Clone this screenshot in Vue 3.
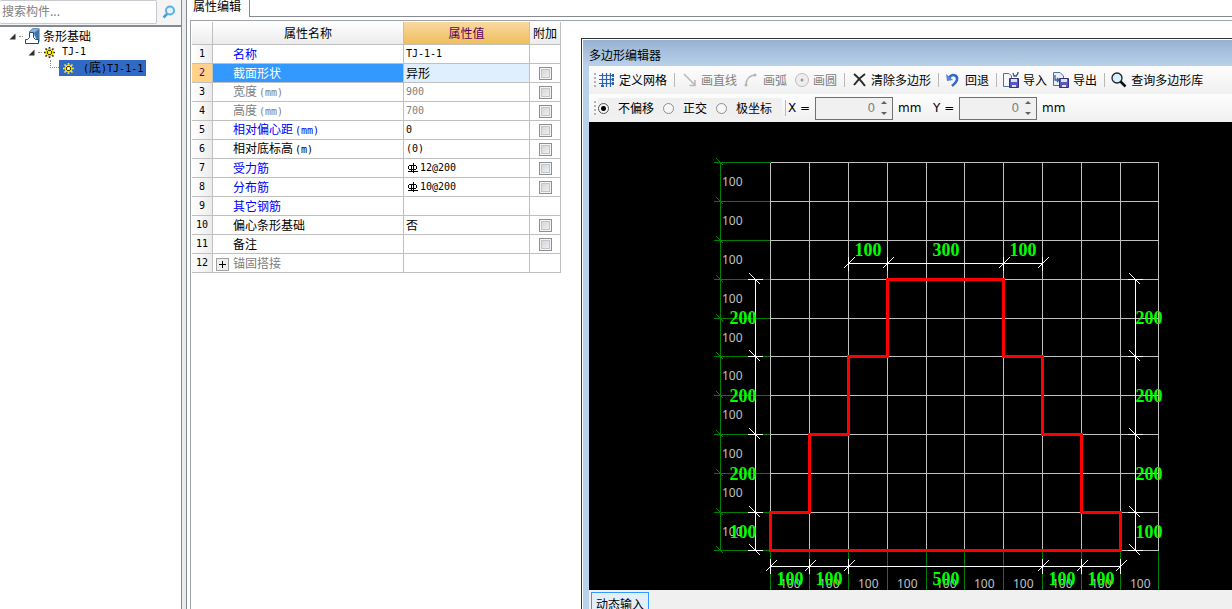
<script setup>
import { ref } from 'vue'

const search = ref('')
const mode = ref('none')
const offsetX = ref('0')
const offsetY = ref('0')

const rows = [
  { name: '名称', tone: 'blue', value: 'TJ-1-1', latin: true },
  { name: '截面形状', tone: 'selected', value: '异形', box: true },
  { name: '宽度', unit: '(mm)', tone: 'gray', value: '900', latin: true, box: true },
  { name: '高度', unit: '(mm)', tone: 'gray', value: '700', latin: true, box: true },
  { name: '相对偏心距', unit: '(mm)', tone: 'blue', value: '0', latin: true, box: true },
  { name: '相对底标高', unit: '(m)', tone: 'black', value: '(0)', latin: true, box: true },
  { name: '受力筋', tone: 'blue', value: '12@200', latin: true, bar: true, box: true },
  { name: '分布筋', tone: 'blue', value: '10@200', latin: true, bar: true, box: true },
  { name: '其它钢筋', tone: 'blue', value: '' },
  { name: '偏心条形基础', tone: 'black', value: '否', box: true },
  { name: '备注', tone: 'black', value: '', box: true },
  { name: '锚固搭接', tone: 'gray', value: '', group: true },
]

// Grid line positions on the drawing canvas, 100 mm apart
const gx = [181, 220, 259, 298, 337, 375, 414, 453, 492, 531, 569]
const gy = [40, 79, 118, 157, 196, 234, 273, 312, 351, 390, 428]
const cells = [0, 1, 2, 3, 4, 5, 6, 7, 8, 9]

const outline = [
  [3, 3], [6, 3], [6, 5], [7, 5], [7, 7], [8, 7], [8, 9], [9, 9], [9, 10],
  [0, 10], [0, 9], [1, 9], [1, 7], [2, 7], [2, 5], [3, 5],
].map(([i, j]) => `${gx[i]},${gy[j]}`).join(' ')

const sideStops = [3, 5, 7, 9, 10]
const topStops = [2, 3, 6, 7]
const bottomStops = [0, 1, 2, 7, 8, 9]

function spans(stops, axis) {
  return stops.slice(1).map((s, k) => ({
    at: Math.floor((axis[s] + axis[stops[k]]) / 2),
    text: (s - stops[k]) * 100,
  }))
}
const sideSpans = spans(sideStops, gy)
const topSpans = spans(topStops, gx)
const bottomSpans = spans(bottomStops, gx)
</script>

<template>
  <div class="page">
    <aside class="side">
      <div class="search">
        <input v-model="search" type="text" placeholder="搜索构件..." aria-label="搜索构件">
        <button type="button" aria-label="搜索">
          <svg width="14" height="14" viewBox="0 0 14 14">
            <path d="M1.500 12.500L5.500 8.500" stroke="#4a9fd8" stroke-width="2.500" />
            <circle cx="8" cy="5.500" r="4" fill="#e4f4fd" stroke="#5cb0e4" stroke-width="2" />
          </svg>
        </button>
      </div>
      <ul class="tree">
        <li class="l1">
          <svg class="arrow" width="7" height="7" viewBox="0 0 7 7"><path d="M6.500 0.500V6.500H0.500Z" fill="#303030" /></svg>
          <i class="dots" />
          <svg width="16" height="16" viewBox="0 0 16 16">
            <path d="M4 4L8 0H14L15 1V14L12 13L8 5Z" fill="#8fb1d2" />
            <path d="M9 5L14 1V14L11 10Z" fill="#3f74a8" />
            <path d="M4 4L8 0.500H13" fill="none" stroke="#5b8fbd" />
            <path d="M4.500 4.500H8.500V9.500L10.500 11.500H13.500V15.500H0.500V11.500H2.500L4.500 9.500Z" fill="#fff" stroke="#14508a" />
          </svg>
          <span class="label">条形基础</span>
        </li>
        <li class="l2">
          <svg class="arrow" width="7" height="7" viewBox="0 0 7 7"><path d="M6.500 0.500V6.500H0.500Z" fill="#303030" /></svg>
          <i class="dots" />
          <svg width="11" height="11" viewBox="0 0 11 11">
            <path d="M5.500 0V11M0 5.500H11M1.500 1.500L9.500 9.500M9.500 1.500L1.500 9.500" stroke="#2c2600" stroke-width="1.600" />
            <circle cx="5.500" cy="5.500" r="3.500" fill="#ffec1c" stroke="#e6cf00" />
            <path d="M4 3.500H7M4 7.500H7M3.500 4V7M7.500 4V7" stroke="#4a4000" />
            <path d="M5 5H6V6H5Z" fill="#fff" />
          </svg>
          <span class="label latin">TJ-1</span>
        </li>
        <li class="l3">
          <i class="elbow" />
          <span class="chosen">
            <svg width="11" height="11" viewBox="0 0 11 11">
              <path d="M5.500 0V11M0 5.500H11M1.500 1.500L9.500 9.500M9.500 1.500L1.500 9.500" stroke="#ffec1c" stroke-width="1.600" />
              <circle cx="5.500" cy="5.500" r="3.500" fill="#ffec1c" stroke="#e6cf00" />
              <path d="M4 3.500H7M4 7.500H7M3.500 4V7M7.500 4V7" stroke="#4a4000" />
              <path d="M5 5H6V6H5Z" fill="#fff" />
            </svg>
            <span class="label"><span class="latin">(</span>底<span class="latin">)TJ-1-1</span></span>
          </span>
        </li>
      </ul>
    </aside>
    <div class="splitter" />

    <main class="main">
      <div class="tabs">
        <button type="button" class="tab">属性编辑</button>
        <div class="tabline" />
      </div>
      <div class="body">
        <table class="props">
          <colgroup><col class="c-no"><col class="c-name"><col class="c-value"><col class="c-box"></colgroup>
          <thead>
            <tr><th /><th>属性名称</th><th class="hot">属性值</th><th>附加</th></tr>
          </thead>
          <tbody>
            <tr v-for="(r, i) in rows" :key="r.name" :class="r.tone">
              <th scope="row" class="latin">{{ i + 1 }}</th>
              <td class="name" :class="{ group: r.group }">
                <button v-if="r.group" type="button" class="plus" aria-label="展开">
                  <svg width="11" height="11" viewBox="0 0 11 11"><path d="M2 5.500H9M5.500 2V9" stroke="#000" /></svg>
                </button>{{ r.name }}<span v-if="r.unit" class="latin unit">{{ r.unit }}</span>
              </td>
              <td class="value" :class="{ latin: r.latin }">
                <svg v-if="r.bar" class="bar" width="11" height="10" viewBox="0 0 11 10">
                  <path d="M4.500 2V9M6.500 0V10M2 2.500H9M2 6.500H9M1.500 3V6M9.500 3V6M1 8.500H11" fill="none" stroke="#000" />
                </svg>{{ r.value }}
              </td>
              <td class="box"><input v-if="r.box" type="checkbox" :aria-label="r.name + ' 附加'"></td>
            </tr>
          </tbody>
        </table>

        <section class="editor">
          <header class="title">多边形编辑器</header>
          <div class="client">
            <div class="bar1">
              <i class="grip" />
              <button type="button" class="tool">
                <svg width="16" height="16" viewBox="0 0 16 16">
                  <path d="M3.500 1V15M7.500 1V15M11.500 1V15M0 3.500H15M0 7.500H15M0 11.500H15" stroke="#2d63b8" stroke-width="1.200" />
                  <path d="M2 13H5V15H2ZM13 2H15V5H13ZM13 6H15V9H13ZM13 10H15V13H13Z" fill="#2d63b8" />
                </svg>定义网格
              </button>
              <i class="sep" />
              <button type="button" class="tool off" disabled>
                <svg width="16" height="16" viewBox="0 0 16 16">
                  <path d="M3 2L14 13M14 8V13.500H8.500" fill="none" stroke="#b8b8b8" stroke-width="1.500" />
                </svg>画直线
              </button>
              <button type="button" class="tool off" disabled>
                <svg width="16" height="16" viewBox="0 0 16 16">
                  <path d="M3 13Q3 4 12 3" fill="none" stroke="#b4b4b4" stroke-width="1.500" />
                  <circle cx="3" cy="13" r="1.500" fill="#b4b4b4" /><circle cx="12" cy="3" r="1.500" fill="#b4b4b4" />
                </svg>画弧
              </button>
              <button type="button" class="tool off" disabled>
                <svg width="16" height="16" viewBox="0 0 16 16">
                  <circle cx="9" cy="8" r="6.500" fill="#eee" stroke="#bcbcbc" /><circle cx="9" cy="8" r="1.500" fill="#999" />
                </svg>画圆
              </button>
              <i class="sep" />
              <button type="button" class="tool">
                <svg width="16" height="16" viewBox="0 0 16 16">
                  <path d="M3 2Q8 6 14 14M14 2Q8 6 3 13" fill="none" stroke="#2b2b2b" stroke-width="2" />
                </svg>清除多边形
              </button>
              <i class="sep" />
              <button type="button" class="tool">
                <svg width="16" height="16" viewBox="0 0 16 16">
                  <path d="M4 6C7 1 13 3 12 8C11 11 9 12 7 14" fill="none" stroke="#3169c6" stroke-width="2.500" />
                  <path d="M1 2L2 9L8 8Z" fill="#4f86d9" />
                </svg>回退
              </button>
              <i class="sep" />
              <button type="button" class="tool">
                <svg width="16" height="16" viewBox="0 0 16 16">
                  <path d="M0.500 1.500H6L8.500 4V14.500H0.500Z" fill="#f3f6fb" stroke="#52709c" />
                  <path d="M6.500 6.500H15.500V15.500H6.500Z" fill="#5959bd" stroke="#323282" />
                  <path d="M8 7H14V10H8ZM9 13H13V15H9Z" fill="#dfe0f6" />
                  <path d="M10 1L11 4H14M11 4C14 4 15 2 15 0" fill="none" stroke="#46566b" stroke-width="1.300" />
                </svg>导入
              </button>
              <button type="button" class="tool">
                <svg width="16" height="16" viewBox="0 0 16 16">
                  <path d="M0.500 0.500H7L10.500 4V13.500H0.500Z" fill="#e9eff8" stroke="#52709c" />
                  <path d="M6.500 6.500H15.500V15.500H6.500Z" fill="#5959bd" stroke="#323282" />
                  <path d="M8 7H14V10H8ZM9 13H13V15H9Z" fill="#dfe0f6" />
                  <path d="M2 3V8H6M4 6L6 8L4 10" fill="none" stroke="#3d5f92" stroke-width="1.300" />
                </svg>导出
              </button>
              <i class="sep" />
              <button type="button" class="tool">
                <svg width="16" height="16" viewBox="0 0 16 16">
                  <circle cx="6" cy="6" r="5" fill="#d4f1fb" stroke="#222" stroke-width="1.300" />
                  <path d="M9.500 9.500L14.500 14.500" stroke="#111" stroke-width="2.500" />
                </svg>查询多边形库
              </button>
            </div>
            <div class="bar2">
              <i class="grip" />
              <div class="modes">
                <label><input v-model="mode" type="radio" name="mode" value="none">不偏移</label>
                <label><input v-model="mode" type="radio" name="mode" value="ortho">正交</label>
                <label><input v-model="mode" type="radio" name="mode" value="polar">极坐标</label>
              </div>
              <i class="sep2" />
              <label class="lead" for="ox">X =</label>
              <span class="spin">
                <input id="ox" v-model="offsetX" type="text">
                <span class="steps">
                  <button type="button" aria-label="X +"><i class="up" /></button>
                  <button type="button" aria-label="X -"><i class="down" /></button>
                </span>
              </span>
              <span class="mm">mm</span>
              <label class="lead y" for="oy">Y =</label>
              <span class="spin">
                <input id="oy" v-model="offsetY" type="text">
                <span class="steps">
                  <button type="button" aria-label="Y +"><i class="up" /></button>
                  <button type="button" aria-label="Y -"><i class="down" /></button>
                </span>
              </span>
              <span class="mm">mm</span>
            </div>
            <svg class="canvas" height="468">
              <g transform="translate(0.5 0.5)" fill="none">
                <g stroke="#008000">
                  <path :d="`M131 ${gy[0]}V${gy[10]}`" />
                  <path v-for="y in gy" :key="'a' + y" :d="`M124 ${y}H181M127 ${y - 4}L134 ${y + 3}`" />
                  <path v-for="x in gx" :key="'b' + x" :d="`M${x} 428V468`" />
                </g>
                <g stroke="#c0c0c0">
                  <path v-for="y in gy" :key="'h' + y" :d="`M181 ${y}H569`" />
                  <path v-for="x in gx" :key="'v' + x" :d="`M${x} 40V428`" />
                </g>
              </g>
              <g class="small">
                <text v-for="c in cells" :key="'s' + c" x="133" :y="gy[c] + 24">100</text>
                <text v-for="c in cells" :key="'t' + c" :x="gx[c] + 10" y="466">100</text>
              </g>
              <g transform="translate(0.5 0.5)" fill="none" stroke="#fff">
                <path d="M259 141H453M166 157V428M546 157V428M181 444H531" />
                <path v-for="s in topStops" :key="'p' + s" :d="`M${gx[s]} 134V148M${gx[s] - 5} 146L${gx[s] + 6} 135`" />
                <path v-for="s in bottomStops" :key="'q' + s" :d="`M${gx[s]} 436V451M${gx[s] - 5} 449L${gx[s] + 6} 438`" />
                <template v-for="x in [166, 546]" :key="x">
                  <path v-for="s in sideStops" :key="s" :d="`M${x - 8} ${gy[s]}H${x + 7}M${x - 6} ${gy[s] - 6}L${x + 5} ${gy[s] + 5}`" />
                </template>
              </g>
              <polygon :points="outline" transform="translate(0.5 0.5)" fill="none" stroke="#f00" stroke-width="3" />
              <g class="big">
                <text v-for="s in topSpans" :key="'u' + s.at" :x="s.at + 1" y="134">{{ s.text }}</text>
                <text v-for="s in bottomSpans" :key="'w' + s.at" :x="s.at + 1" y="463">{{ s.text }}</text>
                <text v-for="s in sideSpans" :key="'l' + s.at" x="154" :y="s.at + 7">{{ s.text }}</text>
                <text v-for="s in sideSpans" :key="'r' + s.at" x="560" :y="s.at + 7">{{ s.text }}</text>
              </g>
            </svg>
            <footer class="foot"><button type="button">动态输入</button></footer>
          </div>
        </section>
      </div>
    </main>
  </div>
</template>

<style>
html, body { background: #fff; overflow: hidden; }
</style>

<style scoped>
* { box-sizing: border-box; }
.page {
  display: flex;
  height: 100vh;
  overflow: hidden;
  font: 12px/16px "Noto Sans CJK SC", "Liberation Sans", sans-serif;
  color: #000;
}
button { font: inherit; color: inherit; padding: 0; border: 0; background: none; }
.latin { font-family: "DejaVu Sans Mono", monospace; font-size: 10px; }

.side { width: 182px; flex: none; border-right: 1px solid #868991; }
.search {
  display: flex;
  align-items: center;
  height: 27px;
  padding-bottom: 1px;
  border-bottom: 2px solid #868991;
  background: #f4f4f4;
}
.search input {
  flex: 1;
  min-width: 0;
  height: 24px;
  padding: 0 2px 3px;
  border: 1px solid #c8cad0;
  border-left: 0;
  border-radius: 2px;
  background: #fff;
  font: inherit;
}
.search input::placeholder { color: #808080; opacity: 1; }
.search button { display: flex; width: 24px; padding-left: 5px; }
.tree { list-style: none; margin: 0; padding: 1px 0 0; }
.tree li { display: flex; align-items: center; height: 16px; }
.l1 { padding-left: 9px; }
.l2 { padding-left: 28px; }
.l3 { padding-left: 50px; }
.dots { width: 4px; margin: 0 2px 0 3px; border-top: 1px dotted #909090; }
.l1 .label { margin-left: 2px; }
.l2 .label { margin-left: 7px; }
.elbow { width: 9px; height: 8px; margin-bottom: 8px; border: dotted #909090; border-width: 0 0 1px 1px; }
.chosen { display: flex; align-items: center; height: 16px; padding: 0 3px 0 4px; background: #316ac5; }
.chosen .label { margin-left: 9px; white-space: nowrap; }
.splitter { width: 5px; flex: none; background: #e9ebee; border-right: 1px solid #868991; }

.main { flex: 1; min-width: 0; display: flex; flex-direction: column; padding-left: 3px; }
.tabs { display: flex; height: 17px; margin-left: -2px; }
.tab { display: flex; align-items: flex-end; width: 61px; height: 17px; padding: 0 0 3px 5px; flex: none; }
.tabline { flex: 1; border: solid #868991; border-width: 0 0 1px 1px; }
.body { flex: 1; display: flex; align-items: flex-start; margin-top: 3px; border: solid #a0a3a8; border-width: 1px 0 0 1px; min-height: 0; }

.props { flex: none; width: 369px; margin: 1px 20px 0 1px; table-layout: fixed; border-collapse: separate; border-spacing: 0; }
.c-no { width: 21px; }
.c-name { width: 191px; }
.c-value { width: 126px; }
.c-box { width: 31px; }
.props th, .props td {
  height: 19px;
  padding: 0;
  border: solid #c0c0c0;
  border-width: 0 1px 1px 0;
  font-weight: normal;
  line-height: 16px;
  white-space: nowrap;
  overflow: hidden;
}
.props thead th { height: 23px; background: linear-gradient(#fff, #ececec); }
.props thead .hot { background: linear-gradient(#f8d9a0, #f0be5c); color: #5b005b; }
.props tbody th { background: linear-gradient(90deg, #fff, #ececec); }
.props .name { padding-left: 20px; }
.props .value { padding-left: 2px; }
.unit { margin-left: 2px; }
.blue .name { color: #00f; }
.gray td { color: #808080; }
.selected .name { background: #3399ff; color: #fff; }
.selected .value { background: #e0effe; }
.props .selected th { background: #ffd28a; color: #5b005b; }
.props .group { padding-left: 3px; }
.plus { display: inline-flex; width: 13px; height: 13px; margin-right: 4px; border: 1px solid #a0a0a0; background: #eee; vertical-align: -2px; }
.bar { vertical-align: -2px; margin-right: 2px; margin-left: 1px; }
.props .box { text-align: center; line-height: 0; }
.box input {
  appearance: none;
  width: 13px;
  height: 13px;
  margin: 0;
  border: 1px solid #8e8f8f;
  box-shadow: inset 0 0 0 1px #f4f4f4, inset 0 0 0 2px #c2c6cb;
  background: linear-gradient(135deg, #cbcfd5, #f6f6f6);
}

.editor {
  flex: 1;
  min-width: 0;
  align-self: stretch;
  display: flex;
  flex-direction: column;
  margin-top: 17px;
  border: solid #303438;
  border-width: 1px 0 0 1px;
  background: #b9d1ea;
  padding: 1px 0 0 7px;
  box-shadow: inset 1px 1px #fff;
}
.title {
  height: 26px;
  margin-left: -6px;
  padding-left: 6px;
  line-height: 30px;
  background: linear-gradient(#97b2d1, #b9d1ea);
}
.client { flex: 1; display: flex; flex-direction: column; background: #f0f0f0; min-height: 0; }
.bar1, .bar2 {
  flex: none;
  display: flex;
  align-items: center;
  height: 28px;
  padding-left: 5px;
  background: linear-gradient(#fdfdfd, #f0f0f0);
  overflow: hidden;
  white-space: nowrap;
}
.bar1 { gap: 6px; }
.grip { flex: none; width: 2px; height: 15px; background: repeating-linear-gradient(#b4b4b4 0 2px, transparent 2px 4px); }
.bar1 .grip { margin-right: -3px; }
.tool { display: flex; align-items: center; gap: 4px; flex: none; }
.tool svg { width: 16px; flex: none; }
.off { color: #808080; }
.sep { flex: none; width: 1px; height: 14px; margin-left: 1px; background: #b8b8b8; }
.modes { display: flex; gap: 9px; align-items: center; height: 20px; padding: 0 10px 0 0; margin-left: 2px; background: #f0f0f0; }
.modes label { display: flex; align-items: center; gap: 9px; }
.modes input {
  appearance: none;
  width: 11px;
  height: 11px;
  margin: 0;
  border: 1px solid #8e8f8f;
  border-radius: 50%;
  background: #f6f6f6;
}
.modes input:checked { background: radial-gradient(circle, #000 0 2px, #f6f6f6 3px); border-color: #555; }
.sep2 { width: 1px; height: 16px; margin: 0 2px 0 3px; background: #b8b8b8; }
.lead, .mm, .spin input { font: 12px/16px "DejaVu Sans", sans-serif; }
.lead { width: 27px; }
.lead.y { width: 26px; margin-left: 11px; }
.spin { display: flex; width: 78px; height: 23px; border: 1px solid #707070; background: #f0f0f0; }
.spin input { flex: 1; min-width: 0; border: 0; padding: 0; background: none; text-align: right; color: #808080; }
.steps { display: flex; flex-direction: column; width: 17px; }
.steps button { flex: 1; display: flex; align-items: center; justify-content: center; }
.up, .down { border: 3px solid transparent; border-top-width: 0; border-bottom: 3px solid #606060; }
.down { border-bottom-width: 0; border-top: 3px solid #606060; }
.mm { width: 24px; margin-left: 5px; }
.canvas { display: block; flex: none; width: 100%; background: #000; shape-rendering: crispEdges; }
.small { fill: #c0c0c0; font: 12px "Noto Sans", sans-serif; }
.big { fill: #0f0; font: bold 18px "Liberation Serif", serif; text-anchor: middle; }
.foot { display: flex; flex: 1; padding: 2px 0 0 2px; overflow: hidden; }
.foot button { height: 24px; padding: 0 4px; border: 1px solid #3399ff; background: #e3effa; }
</style>
